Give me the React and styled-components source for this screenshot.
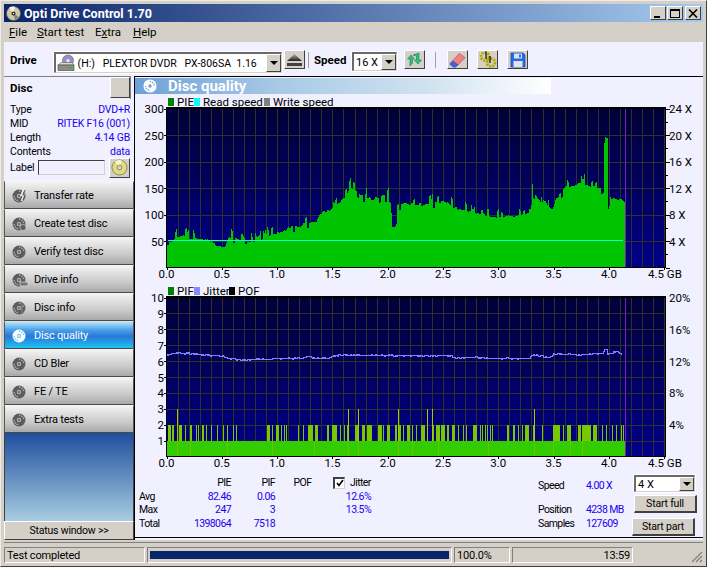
import React from "react";
import styled, { createGlobalStyle } from "styled-components";

const GlobalStyle = createGlobalStyle`
  html, body { margin: 0; padding: 0; background: #d4d0c8; }
  body { font-family: Roboto, "Liberation Sans", Arial, sans-serif; font-size: 10.5px; letter-spacing: -0.2px; color: #000; }
`;

const Window = styled.div`
  width: 707px;
  height: 567px;
  box-sizing: border-box;
  background: #d4d0c8;
  border-top: 1px solid #eeece6;
  border-right: 1px solid #404040;
  border-bottom: 1px solid #404040;
  border-left: 1px solid #eeece6;
  padding: 3px;
  display: flex;
  flex-direction: column;
  overflow: hidden;
`;

const TitleBar = styled.div`
  height: 18px;
  flex: none;
  display: flex;
  align-items: center;
  padding: 0 2px;
  background: linear-gradient(90deg, #0a246a, #a6caf0);
  color: #fff;
  font-weight: bold;
  font-size: 12.5px;
  letter-spacing: 0;
`;

const TitleText = styled.span`
  margin-left: 3px;
  flex: 1;
`;

const WinButton = styled.div`
  width: 16px;
  height: 14px;
  box-sizing: border-box;
  margin-left: ${(p) => p.$gap || 0}px;
  background: #d4d0c8;
  border-top: 1px solid #fff;
  border-left: 1px solid #fff;
  border-right: 1px solid #404040;
  border-bottom: 1px solid #404040;
  display: flex;
  align-items: center;
  justify-content: center;
`;

const MenuBar = styled.div`
  height: 20px;
  flex: none;
  display: flex;
  align-items: center;
  padding-left: 5px;
  font-size: 11.5px;
  letter-spacing: 0;
`;

const MenuItem = styled.span`
  width: ${(p) => p.$w}px;
  u { text-decoration: underline; }
`;

const Toolbar = styled.div`
  height: 34px;
  flex: none;
  display: flex;
  align-items: flex-start;
  background: #f0f0ff;
  padding-left: 6px;
`;

const BoldLabel = styled.span`
  font-weight: bold;
  font-size: 11.5px;
  letter-spacing: 0;
  width: ${(p) => p.$w}px;
  margin-top: 11px;
  margin-left: ${(p) => p.$left || 0}px;
  flex: none;
`;

const Combo = styled.div`
  box-sizing: border-box;
  width: ${(p) => p.$w}px;
  height: ${(p) => p.$h || 19}px;
  margin-top: ${(p) => p.$top ?? 10}px;
  flex: none;
  background: #fff;
  border-top: 2px solid #6a6a6a;
  border-left: 2px solid #6a6a6a;
  border-right: 1px solid #d4d0c8;
  border-bottom: 1px solid #d4d0c8;
  outline: 1px solid #fff;
  display: flex;
  align-items: center;
  font-size: 11px;
  letter-spacing: 0;
  white-space: pre;
  overflow: hidden;
`;

const ComboText = styled.span`
  flex: 1;
  min-width: 0;
  padding-left: ${(p) => p.$pad || 2}px;
  font-size: ${(p) => p.$size || 11}px;
  display: flex;
  align-items: center;
`;

const ComboArrow = styled.div`
  width: 15px;
  align-self: stretch;
  flex: none;
  box-sizing: border-box;
  background: #d4d0c8;
  border-top: 1px solid #fff;
  border-left: 1px solid #fff;
  border-right: 1px solid #404040;
  border-bottom: 1px solid #404040;
  display: flex;
  align-items: center;
  justify-content: center;
  &::after {
    content: "";
    border-top: 4px solid #000;
    border-left: 4px solid transparent;
    border-right: 4px solid transparent;
  }
`;

const ToolButton = styled.div`
  box-sizing: border-box;
  width: 21px;
  height: 19px;
  margin-top: 8px;
  margin-left: ${(p) => p.$left || 0}px;
  flex: none;
  background: #d4d0c8;
  border-top: 1px solid #fff;
  border-left: 1px solid #fff;
  border-right: 1px solid #404040;
  border-bottom: 1px solid #404040;
  display: flex;
  align-items: center;
  justify-content: center;
`;

const ToolSep = styled.div`
  width: 1px;
  height: 16px;
  margin: 10px 0 0 ${(p) => p.$left}px;
  background: #a0a0a0;
  flex: none;
`;

const Body = styled.div`
  flex: 1;
  display: flex;
  min-height: 0;
  background: #f0f0ff;
`;

const Sidebar = styled.div`
  width: 130px;
  flex: none;
  display: flex;
  flex-direction: column;
`;

const DiscHeader = styled.div`
  height: 23px;
  flex: none;
  box-sizing: border-box;
  border-top: 1px solid #808080;
  border-right: 1px solid #808080;
  margin-right: 3px;
  display: flex;
  justify-content: space-between;
  padding-left: 6px;
  font-weight: bold;
  font-size: 11.5px;
  letter-spacing: 0;
  line-height: 22px;
`;

const DiscToggle = styled.div`
  width: 20px;
  height: 21px;
  box-sizing: border-box;
  background: #d4d0c8;
  border-top: 1px solid #fff;
  border-left: 1px solid #fff;
  border-right: 1px solid #404040;
  border-bottom: 1px solid #404040;
`;

const InfoBlock = styled.div`
  height: 82px;
  flex: none;
  box-sizing: border-box;
  padding: 4px 3px 0 6px;
  margin-right: 1px;
`;

const InfoRow = styled.div`
  height: 14px;
  line-height: 14px;
  display: flex;
  justify-content: space-between;
`;

const BlueText = styled.span`
  color: #2000f0;
`;

const LabelRow = styled.div`
  display: flex;
  align-items: center;
  height: 21px;
  margin-top: -2px;
`;

const LabelName = styled.span`
  width: 28px;
  flex: none;
`;

const LabelInput = styled.div`
  width: 67px;
  height: 15px;
  box-sizing: border-box;
  background: #f0f0ff;
  border-top: 1px solid #404040;
  border-left: 1px solid #404040;
  border-right: 1px solid #d4d0c8;
  border-bottom: 1px solid #d4d0c8;
`;

const DiscButton = styled.div`
  width: 21px;
  height: 20px;
  margin-left: 4px;
  box-sizing: border-box;
  background: #d4d0c8;
  border-top: 1px solid #fff;
  border-left: 1px solid #fff;
  border-right: 1px solid #404040;
  border-bottom: 1px solid #404040;
  display: flex;
  align-items: center;
  justify-content: center;
`;

const NavButton = styled.div`
  height: 28px;
  flex: none;
  box-sizing: border-box;
  border: 1px solid #555;
  border-top-color: ${(p) => (p.$active ? "#ddd" : "#f4f4f4")};
  border-bottom-color: #4a4a4a;
  display: flex;
  align-items: center;
  padding: 1px 0 0 6px;
  font-size: 11px;
  letter-spacing: -0.2px;
  color: ${(p) => (p.$active ? "#fff" : "#000")};
  background: ${(p) =>
    p.$active
      ? "linear-gradient(180deg, #b6e4fa 0%, #4ba2e8 30%, #2a78d8 55%, #1fa6ea 82%, #22c4f2 100%)"
      : "linear-gradient(180deg, #f3f3f3 0%, #e2e2e2 25%, #c8c8c8 65%, #a8a8a8 100%)"};
`;

const NavLabel = styled.span`
  margin-left: 5px;
`;

const SideFill = styled.div`
  height: 88px;
  flex: none;
  box-sizing: border-box;
  border: 1px solid #404040;
  border-width: 0 1px;
  background: linear-gradient(180deg, #1f4e9e, #a8cde0);
`;

const StatusToggle = styled.div`
  height: 19px;
  flex: none;
  box-sizing: border-box;
  background: #d4d0c8;
  border-top: 1px solid #fff;
  border-left: 1px solid #fff;
  border-right: 1px solid #404040;
  border-bottom: 1px solid #404040;
  display: flex;
  align-items: center;
  justify-content: center;
`;

const Main = styled.div`
  flex: none;
  width: 569px;
  height: 464px;
  box-sizing: border-box;
  border-top: 1px solid #000;
  border-left: 1px solid #000;
  display: flex;
  flex-direction: column;
`;

const Heading = styled.div`
  width: 416px;
  height: 16px;
  margin-top: 1px;
  flex: none;
  display: flex;
  align-items: center;
  padding-left: 8px;
  box-sizing: border-box;
  color: #fff;
  font-size: 15px;
  letter-spacing: 0;
  font-weight: bold;
  background: linear-gradient(90deg, #6ea0d8 0%, #a8cae6 35%, #d0e2f0 70%, #ffffff 100%);
`;

const HeadingText = styled.span`
  margin-left: 11px;
`;

const ChartSvg = styled.svg`
  display: block;
  flex: none;
  font-family: Roboto, "Liberation Sans", Arial, sans-serif;
  font-size: 11.5px;
  letter-spacing: 0;
`;

const StatsRow = styled.div`
  height: 65px;
  flex: none;
  display: flex;
  border-bottom: 1px solid #000;
  box-sizing: content-box;
  font-size: 10.5px;
  letter-spacing: -0.6px;
`;

const StatsGrid = styled.div`
  display: grid;
  grid-template-columns: 42px 50px 44px 55px 41px;
  grid-auto-rows: 13.5px;
  margin: 4px 0 0 4px;
  line-height: 13.5px;
`;

const ColHead = styled.span`
  text-align: ${(p) => p.$align || "right"};
`;

const Num = styled.span`
  color: #2000f0;
  text-align: right;
`;

const JitterHead = styled.label`
  display: flex;
  align-items: center;
  gap: 5px;
  padding-left: 3px;
`;

const CheckBox = styled.span`
  width: 12px;
  height: 12px;
  box-sizing: border-box;
  background: #fff;
  flex: none;
  border-top: 2px solid #404040;
  border-left: 2px solid #404040;
  border-right: 1px solid #d4d0c8;
  border-bottom: 1px solid #d4d0c8;
  display: flex;
  align-items: center;
  justify-content: center;
`;

const Readout = styled.div`
  display: grid;
  grid-template-columns: 48px 50px;
  grid-template-rows: 14px 10px 13.5px 13.5px;
  margin: 7px 0 0 167px;
  line-height: 14px;
`;

const Controls = styled.div`
  margin-left: -2px;
  width: 66px;
  display: flex;
  flex-direction: column;
`;

const Push = styled.div`
  box-sizing: border-box;
  width: 63px;
  height: 18px;
  margin-top: ${(p) => p.$top}px;
  margin-left: ${(p) => p.$left}px;
  background: #d4d0c8;
  border-top: 1px solid #fff;
  border-left: 1px solid #fff;
  border-right: 2px solid #404040;
  border-bottom: 2px solid #404040;
  display: flex;
  align-items: center;
  justify-content: center;
  letter-spacing: -0.2px;
`;

const StatusBar = styled.div`
  height: 21px;
  flex: none;
  display: flex;
  padding-top: 4px;
  box-sizing: border-box;
  position: relative;
  background: #d4d0c8;
  border-top: 1px solid #808080;
  margin-top: 2px;
  font-size: 11px;
  letter-spacing: -0.2px;
`;

const StatusCell = styled.div`
  box-sizing: border-box;
  width: ${(p) => p.$w}px;
  margin-right: 2px;
  height: 16px;
  border-top: 1px solid #808080;
  border-left: 1px solid #808080;
  border-right: 1px solid #fff;
  border-bottom: 1px solid #fff;
  padding: 0 2px;
  flex: none;
  display: flex;
  align-items: center;
  justify-content: ${(p) => (p.$end ? "flex-end" : "flex-start")};
`;

const Progress = styled.div`
  height: 8px;
  width: 100%;
  background: #0a246a;
`;

const Grip = styled.svg`
  position: absolute;
  right: 0;
  bottom: 0;
`;

/* ---- chart data ---- */

function makeRandom(seed) {
  let s = seed;
  return () => {
    s = (s * 16807) % 2147483647;
    return (s - 1) / 2147483646;
  };
}

function interp(points, x) {
  for (let i = 1; i < points.length; i++) {
    if (x <= points[i][0]) {
      const [x0, y0] = points[i - 1];
      const [x1, y1] = points[i];
      return y0 + ((y1 - y0) * (x - x0)) / (x1 - x0 || 1);
    }
  }
  return points[points.length - 1][1];
}

const PX_PER_GB = 110.6;

const pieShape = [
  [0, 44], [0.05, 48], [0.08, 58], [0.13, 60], [0.2, 55], [0.3, 54], [0.4, 48], [0.45, 38], [0.52, 38],
  [0.56, 58], [0.62, 56], [0.68, 46], [0.75, 47], [0.85, 52], [0.95, 62], [1.05, 68], [1.1, 76], [1.2, 76],
  [1.25, 84], [1.35, 88], [1.4, 104], [1.5, 110], [1.55, 122], [1.6, 130], [1.65, 152], [1.7, 146],
  [1.75, 136], [1.85, 128], [1.95, 134], [2.02, 132], [2.03, 76], [2.07, 78], [2.08, 118], [2.2, 120],
  [2.3, 118], [2.5, 124], [2.6, 112], [2.8, 102], [3.0, 94], [3.2, 98], [3.29, 102], [3.3, 142], [3.36, 130],
  [3.4, 112], [3.48, 110], [3.52, 130], [3.6, 150], [3.75, 160], [3.9, 148], [3.945, 150], [3.95, 244],
  [3.98, 240], [3.985, 108], [3.995, 108], [4.0, 130], [4.1, 128], [4.15, 118],
];

const jitterShape = [
  [97, 225], [110, 220], [130, 218], [160, 219], [190, 221], [230, 225], [265, 226], [285, 235], [320, 240],
  [360, 236], [400, 237], [450, 234], [490, 234], [525, 228], [540, 234], [575, 233], [610, 225], [660, 224],
  [720, 225], [825, 225], [885, 226], [945, 225], [965, 232], [1025, 230], [1055, 234], [1185, 234],
  [1195, 223], [1220, 226], [1245, 232], [1260, 220], [1305, 220], [1335, 225], [1375, 220], [1405, 220],
  [1410, 208], [1417, 208], [1420, 222], [1450, 212], [1463, 223],
];

// x of the PIF bars, in thirds of a pixel from the chart's left edge
const pif2 = [
  [100, 107], [110, 113], [115, 118], [132, 140], [150, 153], [165, 170], [182, 185], [190, 193], [200, 203],
  [205, 208], [212, 215], [228, 232], [245, 250], [265, 268], [277, 280], [295, 298], [303, 306], [397, 405],
  [410, 413], [423, 432], [437, 440], [447, 450], [453, 456], [490, 493], [505, 508], [520, 535], [540, 548],
  [575, 582], [590, 607], [615, 618], [628, 631], [635, 640], [660, 672], [680, 690], [695, 712], [730, 740],
  [745, 748], [755, 765], [780, 785], [790, 797], [805, 808], [815, 825], [830, 833], [842, 845], [858, 870],
  [877, 880], [892, 897], [903, 915], [918, 930], [935, 943], [950, 953], [955, 960], [970, 973], [985, 988],
  [993, 996], [1015, 1025], [1035, 1038], [1042, 1045], [1050, 1053], [1057, 1060], [1065, 1068], [1072, 1075],
  [1117, 1123], [1135, 1140], [1150, 1153], [1160, 1163], [1170, 1183], [1195, 1200], [1222, 1225], [1255, 1275],
  [1285, 1288], [1295, 1307], [1330, 1337], [1342, 1367], [1375, 1385], [1400, 1403], [1412, 1415], [1430, 1433],
  [1442, 1445], [1457, 1460], [1465, 1468],
];
const pif3 = [127, 640, 670, 790, 877, 892, 1198];
const baseStripes = [127, 165, 277, 412, 537, 640, 670, 790, 830, 910, 1060, 1198, 1255, 1305, 1342];

function piePath() {
  const rnd = makeRandom(4711);
  const left = 31.5;
  const bottom = 173.5;
  const perUnit = 159 / 300;
  let d = "";
  let spike = 0;
  for (let i = 0; i < 459; i++) {
    const gb = i / PX_PER_GB;
    const base = interp(pieShape, gb);
    if (i % 2 === 0) spike = rnd();
    let v = base + spike * 6 - 2;
    if (spike > 0.8 && gb < 3.94) v += 12 * rnd() + 3;
    if (spike < 0.06 && gb > 0.3) v -= 8;
    const y = Math.round(bottom - v * perUnit);
    d += `M${left + i + 0.5} ${bottom}V${y}`;
  }
  return d;
}

function jitterLine() {
  const rnd = makeRandom(2029);
  const pts = [];
  for (let zx = 97; zx <= 1463; zx += 3) {
    const zy = interp(jitterShape, zx) + (rnd() - 0.5) * 4;
    const x = Math.round(zx / 3);
    const y = Math.round(280 + zy / 3 - 284) + 0.5;
    pts.push(`${x},${y}`);
  }
  return pts.join(" ");
}

const piePathData = piePath();
const jitterData = jitterLine();

/* ---- charts ---- */

const PLOT_LEFT = 31.5;
const PLOT_RIGHT = 530.5;

function PlotBack({ id, top, bottom, rows }) {
  const h = bottom - top;
  const verticals = [];
  for (let i = 1; i < 46; i++) {
    const x = Math.round(PLOT_LEFT + i * 11.06) + 0.5;
    verticals.push(<line key={i} x1={x} x2={x} y1={top} y2={bottom} />);
  }
  const horizontals = [];
  for (let i = 1; i < rows; i++) {
    const y = Math.round(top + (i * h) / rows) + 0.5;
    horizontals.push(<line key={i} x1={PLOT_LEFT} x2={PLOT_RIGHT} y1={y} y2={y} />);
  }
  return (
    <>
      <defs>
        <linearGradient id={id} x1="0" x2="0" y1="0" y2="1">
          <stop offset="0" stopColor="#000038" />
          <stop offset="1" stopColor="#000088" />
        </linearGradient>
      </defs>
      <rect x={PLOT_LEFT} y={top} width={PLOT_RIGHT - PLOT_LEFT} height={h} fill={`url(#${id})`} />
      <g stroke="#33302c" strokeWidth="1" shapeRendering="crispEdges">
        {verticals}
        {horizontals}
      </g>
    </>
  );
}

function PlotFrame({ top, bottom, rightTicks, leftTicks }) {
  const ticks = [];
  if (rightTicks) {
    for (let i = 0; i <= 12; i++) {
      const y = Math.round(top + (i * (bottom - top)) / 12) + 0.5;
      ticks.push(<line key={"r" + i} x1={PLOT_RIGHT} x2={PLOT_RIGHT + (i % 2 ? 2 : 4)} y1={y} y2={y} />);
    }
  }
  for (let i = 0; i < leftTicks; i++) {
    const y = Math.round(top + (i * (bottom - top)) / leftTicks) + 0.5;
    ticks.push(<line key={"l" + i} x1={PLOT_LEFT - 3} x2={PLOT_LEFT} y1={y} y2={y} />);
  }
  for (let i = 0; i <= 9; i++) {
    const x = Math.round(PLOT_LEFT + i * 55.3) + 0.5;
    ticks.push(<line key={"b" + i} x1={x} x2={x} y1={bottom} y2={bottom + 2} />);
  }
  return (
    <g stroke="#000" shapeRendering="crispEdges" fill="none">
      <rect x={PLOT_LEFT} y={top} width={PLOT_RIGHT - PLOT_LEFT} height={bottom - top} />
      <line x1={PLOT_LEFT - 0.5} x2={PLOT_RIGHT} y1={top - 1} y2={top - 1} />
      {ticks}
    </g>
  );
}

function XLabels({ y }) {
  const labels = ["0.0", "0.5", "1.0", "1.5", "2.0", "2.5", "3.0", "3.5", "4.0"];
  return (
    <>
      {labels.map((t, i) => (
        <text key={t} x={PLOT_LEFT + i * 55.3} y={y} textAnchor="middle">
          {t}
        </text>
      ))}
      <text x={513} y={y}>4.5 GB</text>
    </>
  );
}

function Legend({ y, items }) {
  return (
    <>
      {items.map((it) => (
        <React.Fragment key={it.label}>
          <rect x={it.x} y={y} width="6" height="8" fill={it.color} />
          <text x={it.x + 9} y={y + 8}>{it.label}</text>
        </React.Fragment>
      ))}
    </>
  );
}

function SpeedChart() {
  const top = 14.5;
  const bottom = 173.5;
  const left = ["300", "250", "200", "150", "100", "50"];
  const right = ["24 X", "20 X", "16 X", "12 X", "8 X", "4 X"];
  return (
    <ChartSvg width="568" height="190" viewBox="0 0 568 190">
      <Legend
        y={4}
        items={[
          { x: 33, color: "#008000", label: "PIE" },
          { x: 59, color: "#00ffff", label: "Read speed" },
          { x: 129, color: "#808080", label: "Write speed" },
        ]}
      />
      <PlotBack id="speedBack" top={top} bottom={bottom} rows={6} />
      <path d={piePathData} stroke="#00c400" strokeWidth="1" fill="none" shapeRendering="crispEdges" />
      <line x1="33" x2="488" y1="146.5" y2="146.5" stroke="#00ffd8" strokeWidth="1" shapeRendering="crispEdges" />
      <line x1="490.5" x2="490.5" y1={top} y2={bottom} stroke="#8020a0" shapeRendering="crispEdges" />
      <PlotFrame top={top} bottom={bottom} rightTicks leftTicks={6} />
      {left.map((t, i) => (
        <text key={t} x="29" y={top + i * 26.5 + 4.5} textAnchor="end">{t}</text>
      ))}
      {right.map((t, i) => (
        <text key={t} x="534" y={top + i * 26.5 + 4.5}>{t}</text>
      ))}
      <XLabels y={184} />
    </ChartSvg>
  );
}

function QualityChart() {
  const top = 13.5;
  const bottom = 172.5;
  const rowH = 15.9;
  const toX = (z) => z / 3;
  const left = ["10", "9", "8", "7", "6", "5", "4", "3", "2", "1"];
  const right = ["20%", "16%", "12%", "8%", "4%"];
  return (
    <ChartSvg width="568" height="188" viewBox="0 0 568 188">
      <Legend
        y={3}
        items={[
          { x: 33, color: "#008000", label: "PIF" },
          { x: 59, color: "#8888ff", label: "Jitter" },
          { x: 94, color: "#000000", label: "POF" },
        ]}
      />
      <PlotBack id="qualityBack" top={top} bottom={bottom} rows={10} />
      <g shapeRendering="crispEdges">
        {pif2.map(([a, b], i) => (
          <rect key={i} x={toX(a)} y={bottom - 2 * rowH} width={toX(b - a)} height={2 * rowH} fill="#78c800" />
        ))}
        {pif3.map((z) => (
          <rect key={z} x={toX(z)} y={bottom - 3 * rowH} width="1" height={3 * rowH} fill="#a8c800" />
        ))}
        <rect x={PLOT_LEFT} y={bottom - rowH} width={459} height={rowH} fill="#33cc00" />
        {baseStripes.map((z) => (
          <rect key={z} x={toX(z)} y={bottom - rowH} width="1" height={rowH} fill="#70c000" />
        ))}
      </g>
      <polyline points={jitterData} fill="none" stroke="#8080ff" strokeWidth="1" shapeRendering="crispEdges" />
      <line x1="490.5" x2="490.5" y1={top} y2={bottom} stroke="#8020a0" shapeRendering="crispEdges" />
      <PlotFrame top={top} bottom={bottom} leftTicks={10} />
      {left.map((t, i) => (
        <text key={t} x="29" y={top + i * rowH + 4.5} textAnchor="end">{t}</text>
      ))}
      {right.map((t, i) => (
        <text key={t} x="534" y={top + i * 31.8 + 4.5}>{t}</text>
      ))}
      <XLabels y={183} />
    </ChartSvg>
  );
}

/* ---- icons ---- */

function AppDisc() {
  return (
    <svg width="15" height="15" viewBox="0 0 15 15">
      <circle cx="7.5" cy="7.5" r="7" fill="#cfc9a8" stroke="#555" strokeWidth="0.6" />
      <path d="M7.5 7.5 L3 1.8 A7 7 0 0 1 9 .7 Z" fill="#f4f0e0" />
      <path d="M7.5 7.5 L13 11 A7 7 0 0 1 9 14.2 Z" fill="#8a8470" />
      <circle cx="7.5" cy="7.5" r="2" fill="#222" />
      <circle cx="7.5" cy="7.5" r="0.8" fill="#fff" />
    </svg>
  );
}

function NavIcon({ kind, active }) {
  const c = active ? "#fff" : "#5c5c5c";
  const hub = active ? "#7cc0ee" : "#b0b0b0";
  return (
    <svg width="18" height="16" viewBox="0 0 18 16">
      <circle cx="8" cy="8" r="6.5" fill={c} />
      <path d="M8 3.2 A4.8 4.8 0 0 1 12.8 8" fill="none" stroke={hub} strokeWidth="1.4" strokeDasharray="1.4 1" />
      <path d="M3.2 8 A4.8 4.8 0 0 0 8 12.8" fill="none" stroke={hub} strokeWidth="1.4" strokeDasharray="1.4 1" />
      <circle cx="8" cy="8" r="2.2" fill={hub} />
      <circle cx="8" cy="8" r="1" fill={c} />
      {kind === "bolt" && <path d="M13 1 L10.5 7 L13 7 L10.5 13" fill="none" stroke="#f0f0f0" strokeWidth="1.8" />}
      {kind === "bolt" && <path d="M14 2 L11.8 7 L14 7 L12 12" fill="none" stroke="#555" strokeWidth="1" />}
      {kind === "create" && <circle cx="12" cy="11.5" r="3" fill={c} stroke="#ccc" strokeWidth="0.7" />}
      {kind === "drive" && <rect x="9" y="10" width="8" height="4" fill="#777" stroke="#ddd" strokeWidth="0.7" />}
      {kind === "info" && <rect x="10" y="3" width="2" height="11" fill="#777" />}
    </svg>
  );
}

function HeadDisc() {
  return (
    <svg width="14" height="14" viewBox="0 0 16 16">
      <circle cx="8" cy="8" r="7.5" fill="#fff" />
      <path d="M8 3 A5 5 0 0 1 13 8" fill="none" stroke="#6ea0d8" strokeWidth="1.6" strokeDasharray="1.4 1" />
      <path d="M3 8 A5 5 0 0 0 8 13" fill="none" stroke="#6ea0d8" strokeWidth="1.6" strokeDasharray="1.4 1" />
      <circle cx="8" cy="8" r="2" fill="#6ea0d8" />
    </svg>
  );
}

function DriveIcon() {
  return (
    <svg width="18" height="18" viewBox="0 0 18 18" style={{ flex: "none" }}>
      <circle cx="11" cy="6.5" r="5.5" fill="#9a90c8" stroke="#5a5a70" strokeWidth="0.6" />
      <circle cx="11" cy="6.5" r="1.6" fill="#f0f0ff" />
      <path d="M1 11 L4 8.5 L15 8.5 L17 11 Z" fill="#d8d8d0" stroke="#555" strokeWidth="0.5" />
      <rect x="1" y="11" width="16" height="5.5" fill="#8c8c84" stroke="#444" strokeWidth="0.6" />
      <rect x="12" y="13" width="3" height="1.5" fill="#20c020" />
    </svg>
  );
}

function EjectIcon() {
  return (
    <svg width="17" height="14" viewBox="0 0 17 14">
      <defs>
        <linearGradient id="ej" x1="0" x2="0" y1="0" y2="1">
          <stop offset="0" stopColor="#b0b0b0" />
          <stop offset="1" stopColor="#202020" />
        </linearGradient>
      </defs>
      <path d="M8.5 1 L16 8 L1 8 Z" fill="url(#ej)" />
      <rect x="1" y="10" width="15" height="3" fill="#404040" />
    </svg>
  );
}

function RefreshIcon() {
  return (
    <svg width="17" height="15" viewBox="0 0 17 15">
      <path d="M4 14 V7 H1.5 L5 3 L8.5 7 H6.5 V11 Z" fill="#30c080" stroke="#0a7040" strokeWidth="0.5" />
      <path d="M13 1 V8 H15.5 L12 12 L8.5 8 H10.5 V4 L7 3 Z" fill="#30c080" stroke="#0a7040" strokeWidth="0.5" />
    </svg>
  );
}

function EraserIcon() {
  return (
    <svg width="17" height="16" viewBox="0 0 17 16">
      <path d="M10 1.5 L15.5 5 Q16 6 15 7 L9 13 L3.5 9 Z" fill="#f08080" stroke="#a04050" strokeWidth="0.5" />
      <path d="M3.5 9 L9 13 L6.5 15 Q5.5 15.5 4.5 15 L1.5 13 Q0.8 12 1.5 11 Z" fill="#4060e8" stroke="#203090" strokeWidth="0.5" />
    </svg>
  );
}

function GearsIcon() {
  return (
    <svg width="18" height="17" viewBox="0 0 18 17">
      <circle cx="6" cy="5.5" r="4" fill="none" stroke="#b0a800" strokeWidth="2.8" strokeDasharray="2 1" />
      <circle cx="12" cy="11.5" r="4" fill="none" stroke="#b0a800" strokeWidth="2.8" strokeDasharray="2 1" />
      <path d="M7 0.5 V8 M11 5 V12" stroke="#1a1a00" strokeWidth="1.3" />
    </svg>
  );
}

function SaveIcon() {
  return (
    <svg width="16" height="16" viewBox="0 0 16 16">
      <path d="M1 1 H13 L15 3 V15 H1 Z" fill="#2a6ae8" stroke="#1040a0" strokeWidth="0.7" />
      <rect x="4" y="1.5" width="8" height="5" fill="#d8e4f4" />
      <rect x="9" y="2.5" width="2" height="3" fill="#2a6ae8" />
      <rect x="3.5" y="9" width="9" height="6" fill="#e4e4e4" />
    </svg>
  );
}

function CdIcon() {
  return (
    <svg width="17" height="17" viewBox="0 0 17 17">
      <circle cx="8.5" cy="8.5" r="7.5" fill="#e0dc80" stroke="#77734a" strokeWidth="0.8" />
      <path d="M8.5 8.5 L4 2.4 A7.5 7.5 0 0 1 11 1.5 Z" fill="#f8f6d0" />
      <circle cx="8.5" cy="8.5" r="2.4" fill="#d4d0c8" stroke="#77734a" strokeWidth="0.7" />
    </svg>
  );
}

/* ---- page ---- */

const navItems = [
  { label: "Transfer rate", kind: "bolt" },
  { label: "Create test disc", kind: "create" },
  { label: "Verify test disc", kind: "plain" },
  { label: "Drive info", kind: "drive" },
  { label: "Disc info", kind: "info" },
  { label: "Disc quality", kind: "plain", active: true },
  { label: "CD Bler", kind: "plain" },
  { label: "FE / TE", kind: "plain" },
  { label: "Extra tests", kind: "plain" },
];

export default function App() {
  return (
    <Window>
      <GlobalStyle />
      <TitleBar>
        <AppDisc />
        <TitleText>Opti Drive Control 1.70</TitleText>
        <WinButton>
          <svg width="10" height="9"><rect x="1" y="7" width="6" height="2" fill="#000" /></svg>
        </WinButton>
        <WinButton $gap={1}>
          <svg width="10" height="9"><rect x="0.5" y="0.5" width="9" height="8" fill="none" stroke="#000" /><rect x="0" y="0" width="10" height="2" fill="#000" /></svg>
        </WinButton>
        <WinButton $gap={2}>
          <svg width="10" height="9"><path d="M1 0.5 L9 8.5 M9 0.5 L1 8.5" stroke="#000" strokeWidth="1.6" /></svg>
        </WinButton>
      </TitleBar>

      <MenuBar>
        <MenuItem $w={28}><u>F</u>ile</MenuItem>
        <MenuItem $w={58}><u>S</u>tart test</MenuItem>
        <MenuItem $w={38}>E<u>x</u>tra</MenuItem>
        <MenuItem $w={30}><u>H</u>elp</MenuItem>
      </MenuBar>

      <Toolbar>
        <BoldLabel $w={44}>Drive</BoldLabel>
        <Combo $w={228} $h={21} $top={10}>
          <ComboText $pad={1} $size={10.5}>
            <DriveIcon />
            {" (H:)   PLEXTOR DVDR   PX-806SA  1.16"}
          </ComboText>
          <ComboArrow />
        </Combo>
        <ToolButton $left={2}><EjectIcon /></ToolButton>
        <ToolSep $left={3} />
        <BoldLabel $w={38} $left={5}>Speed</BoldLabel>
        <Combo $w={45}>
          <ComboText>16 X</ComboText>
          <ComboArrow />
        </Combo>
        <ToolButton $left={7}><RefreshIcon /></ToolButton>
        <ToolSep $left={10} />
        <ToolButton $left={11}><EraserIcon /></ToolButton>
        <ToolButton $left={9}><GearsIcon /></ToolButton>
        <ToolButton $left={9}><SaveIcon /></ToolButton>
      </Toolbar>

      <Body>
        <Sidebar>
          <DiscHeader>
            Disc
            <DiscToggle />
          </DiscHeader>
          <InfoBlock>
            <InfoRow>Type<BlueText>DVD+R</BlueText></InfoRow>
            <InfoRow>MID<BlueText>RITEK F16 (001)</BlueText></InfoRow>
            <InfoRow>Length<BlueText>4.14 GB</BlueText></InfoRow>
            <InfoRow>Contents<BlueText>data</BlueText></InfoRow>
            <LabelRow>
              <LabelName>Label</LabelName>
              <LabelInput />
              <DiscButton><CdIcon /></DiscButton>
            </LabelRow>
          </InfoBlock>
          {navItems.map((item) => (
            <NavButton key={item.label} $active={item.active}>
              <NavIcon kind={item.kind} active={item.active} />
              <NavLabel>{item.label}</NavLabel>
            </NavButton>
          ))}
          <SideFill />
          <StatusToggle>Status window &gt;&gt;</StatusToggle>
        </Sidebar>

        <Main>
          <Heading>
            <HeadDisc />
            <HeadingText>Disc quality</HeadingText>
          </Heading>
          <SpeedChart />
          <QualityChart />
          <StatsRow>
            <StatsGrid>
              <span />
              <ColHead>PIE</ColHead>
              <ColHead>PIF</ColHead>
              <ColHead $align="center">POF</ColHead>
              <JitterHead>
                <CheckBox>
                  <svg width="8" height="8" viewBox="0 0 8 8"><path d="M1 4 L3 6.5 L7 1" fill="none" stroke="#000" strokeWidth="1.6" /></svg>
                </CheckBox>
                Jitter
              </JitterHead>
              <span>Avg</span>
              <Num>82.46</Num>
              <Num>0.06</Num>
              <span />
              <Num>12.6%</Num>
              <span>Max</span>
              <Num>247</Num>
              <Num>3</Num>
              <span />
              <Num>13.5%</Num>
              <span>Total</span>
              <Num>1398064</Num>
              <Num>7518</Num>
            </StatsGrid>
            <Readout>
              <span>Speed</span>
              <BlueText>4.00 X</BlueText>
              <span />
              <span />
              <span>Position</span>
              <BlueText>4238 MB</BlueText>
              <span>Samples</span>
              <BlueText>127609</BlueText>
            </Readout>
            <Controls>
              <Combo $w={61} $h={17} $top={3}>
                <ComboText>4 X</ComboText>
                <ComboArrow />
              </Combo>
              <Push $top={3} $left={0}>Start full</Push>
              <Push $top={5} $left={-2}>Start part</Push>
            </Controls>
          </StatsRow>
        </Main>
      </Body>

      <StatusBar>
        <StatusCell $w={141}>Test completed</StatusCell>
        <StatusCell $w={305}><Progress /></StatusCell>
        <StatusCell $w={56}>100.0%</StatusCell>
        <StatusCell $w={121} $end>13:59</StatusCell>
        <Grip width="13" height="13" viewBox="0 0 13 13">
          <path d="M12 2 L2 12 M12 6 L6 12 M12 10 L10 12" stroke="#808080" strokeWidth="1.3" />
        </Grip>
      </StatusBar>
    </Window>
  );
}
